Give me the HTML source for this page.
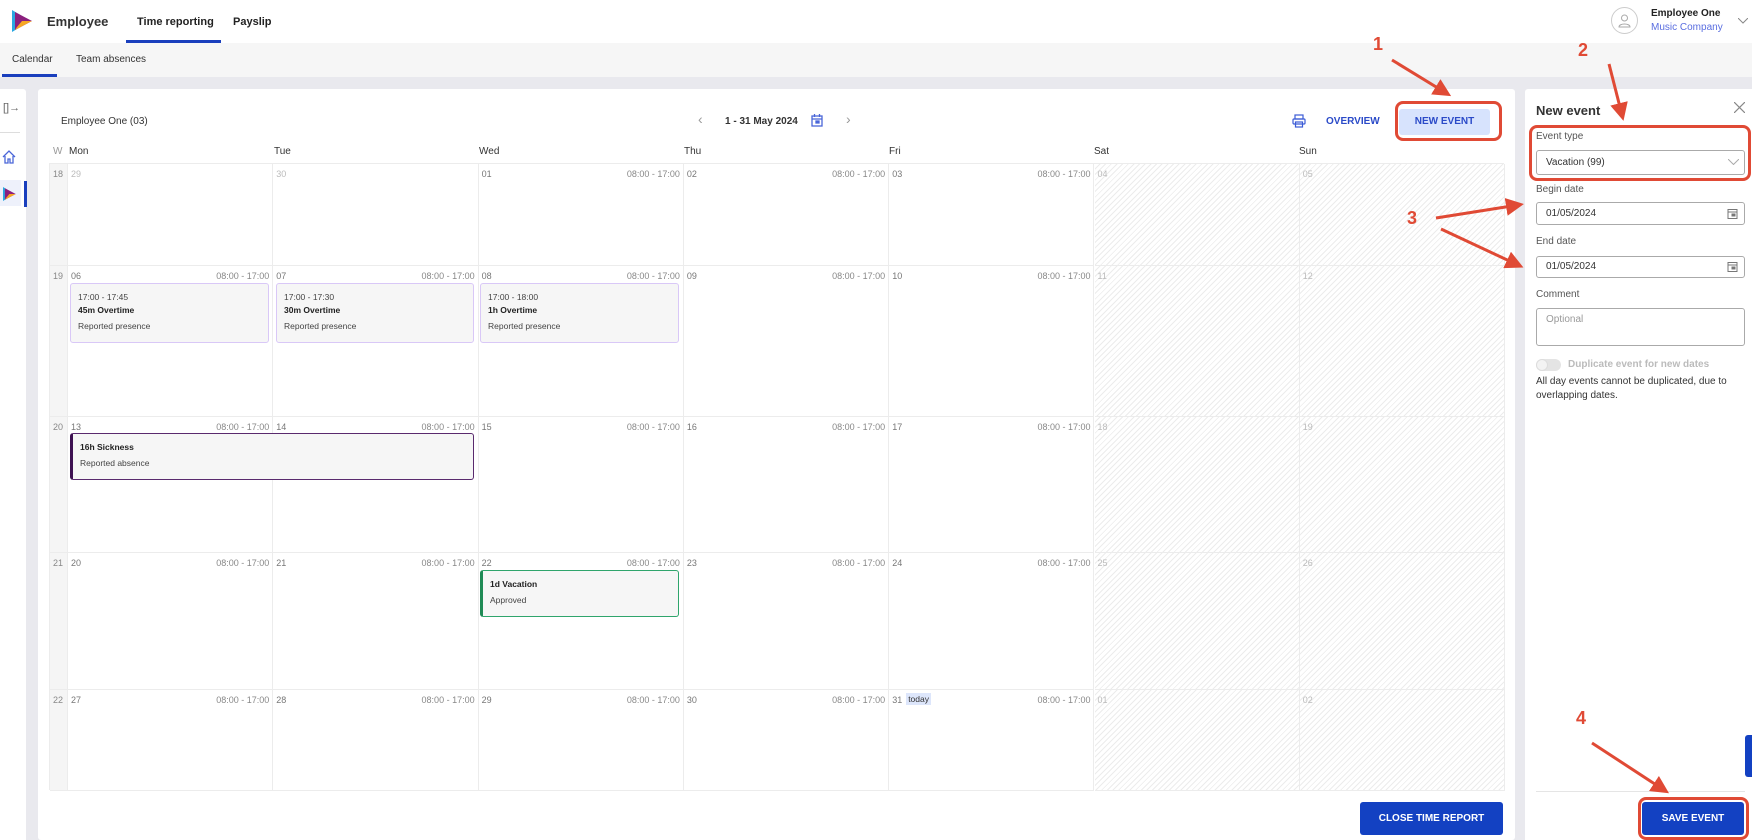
<!DOCTYPE html>
<html><head><meta charset="utf-8">
<style>
*{box-sizing:border-box;margin:0;padding:0}
body{width:1752px;height:840px;overflow:hidden;background:#e9e9ee;font-family:"Liberation Sans",sans-serif;color:#333;position:relative;font-size:10px}
.abs{position:absolute}
.hdr{left:0;top:0;width:1752px;height:43px;background:#fff}
.sub{left:0;top:43px;width:1752px;height:34px;background:#f6f6f6}
.card{left:38px;top:89px;width:1477px;height:751px;background:#fff;border-radius:3px}
.side{left:0;top:89px;width:26px;height:751px;background:#fff;border-radius:0 3px 0 0}
.panel{left:1525px;top:89px;width:227px;height:751px;background:#fff;border-radius:3px 0 0 0}
.cell{position:absolute;border-right:1px solid #ececec;border-bottom:1px solid #ececec}
.dn{position:absolute;left:3px;top:5px;font-size:9px;color:#777}
.dn.g{color:#bbb}
.tm{position:absolute;right:3px;top:5px;font-size:9px;color:#888}
.hatch{background:repeating-linear-gradient(135deg,#fff 0 3px,#ececec 3px 4px)}
.ev{position:absolute;background:#f6f6f6;border:1px solid #d9c8f7;border-radius:3px;padding:7px 0 0 7px;font-size:8.5px;color:#444;line-height:13px}
.ev b{color:#222}
.lbl{position:absolute;left:1536px;font-size:10px;color:#555}
.inp{position:absolute;left:1536px;width:209px;border:1px solid #aaa;border-radius:3px;background:#fff;font-size:10px;padding-left:9px;color:#333}
.red{position:absolute;border:3px solid #e04a35;border-radius:8px}
.num{position:absolute;color:#e04a35;font-weight:bold;font-size:18px}
.btn{position:absolute;background:#1341c2;color:#fff;font-weight:bold;font-size:10px;text-align:center;border-radius:3px}
</style></head><body>
<div class="abs hdr"></div>
<svg class="abs" style="left:12px;top:10px" width="22" height="22" viewBox="0 0 22 22"><polygon points="0,0 0,22 10,16 10,6" fill="#2aa7e0"/><polygon points="3,2 20,11 3,20" fill="#8b1f7e"/><polygon points="10,11 20,11 3,20 5,17" fill="#f7a823"/></svg>
<div class="abs" style="left:47px;top:14px;font-size:13px;font-weight:bold;color:#333">Employee</div>
<div class="abs" style="left:137px;top:16px;font-size:11px;font-weight:bold;color:#222">Time reporting</div>
<div class="abs" style="left:233px;top:16px;font-size:11px;font-weight:bold;color:#222">Payslip</div>
<div class="abs" style="left:126px;top:40px;width:95px;height:3px;background:#1a3fbd"></div>
<div class="abs" style="left:1611px;top:7px;width:27px;height:27px;border:1px solid #ccc;border-radius:50%"></div>
<svg class="abs" style="left:1617px;top:13px" width="15" height="15" viewBox="0 0 15 15" fill="none" stroke="#aaa"><circle cx="7.5" cy="5" r="3"/><path d="M2 14c0-4 11-4 11 0z"/></svg>
<div class="abs" style="left:1651px;top:8px;font-size:10px;font-weight:bold;color:#222">Employee One</div>
<div class="abs" style="left:1651px;top:22px;font-size:10px;color:#5a6ee0">Music Company</div>
<svg class="abs" style="left:1738px;top:18px" width="10" height="6"><path d="M0 0l5 5 5-5" fill="none" stroke="#888"/></svg>
<div class="abs sub"></div>
<div class="abs" style="left:12px;top:54px;font-size:10px;color:#333">Calendar</div>
<div class="abs" style="left:76px;top:54px;font-size:10px;color:#333">Team absences</div>
<div class="abs" style="left:2px;top:74px;width:55px;height:3px;background:#1a3fbd"></div>

<div class="abs side"></div>
<div class="abs" style="left:3px;top:102px;font-size:11px;color:#666">[]→</div>
<div class="abs" style="left:0;top:132px;width:20px;height:1px;background:#ddd"></div>
<svg class="abs" style="left:2px;top:150px" width="14" height="14" viewBox="0 0 14 14" fill="none" stroke="#4a66d8" stroke-width="1.3"><path d="M1 7L7 1l6 6M3 6v7h3V9h2v4h3V6"/></svg>
<div class="abs" style="left:0;top:180px;width:21px;height:26px;background:#eef1fb"></div>
<svg class="abs" style="left:3px;top:187px" width="14" height="14" viewBox="0 0 22 22"><polygon points="0,0 0,22 10,16 10,6" fill="#2aa7e0"/><polygon points="3,2 20,11 3,20" fill="#8b1f7e"/><polygon points="10,11 20,11 3,20 5,17" fill="#f7a823"/></svg>
<div class="abs" style="left:24px;top:181px;width:3px;height:26px;background:#1a3fbd"></div>

<div class="abs card"></div>
<div class="abs" style="left:61px;top:116px;font-size:10px;color:#333">Employee One (03)</div>
<div class="abs" style="left:698px;top:111px;font-size:14px;color:#999">‹</div>
<div class="abs" style="left:725px;top:116px;font-size:10px;font-weight:bold;color:#333">1 - 31 May 2024</div>
<svg class="abs" style="left:811px;top:114px" width="12" height="13" viewBox="0 0 12 13" fill="none" stroke="#4a66d8" stroke-width="1.3"><rect x="1" y="2" width="10" height="10"/><path d="M1 5h10M3.5 0v3M8.5 0v3"/><rect x="5" y="7" width="3" height="2" fill="#4a66d8"/></svg>
<div class="abs" style="left:846px;top:111px;font-size:14px;color:#999">›</div>
<svg class="abs" style="left:1292px;top:114px" width="14" height="14" viewBox="0 0 14 14" fill="none" stroke="#3b5bd6" stroke-width="1.2"><rect x="3" y="1" width="8" height="4"/><rect x="1" y="5" width="12" height="5" rx="1"/><rect x="3.5" y="8" width="7" height="5"/></svg>
<div class="abs" style="left:1326px;top:116px;font-size:10px;font-weight:bold;color:#2a4ac8">OVERVIEW</div>
<div class="abs" style="left:1399px;top:109px;width:91px;height:26px;background:#d7e3fd;border-radius:3px;color:#2a4ac8;font-weight:bold;font-size:10px;text-align:center;line-height:26px">NEW EVENT</div>

<div class="abs" style="left:53px;top:146px;font-size:10px;color:#999">W</div>
<div class="abs" style="left:69px;top:146px;font-size:10px;color:#333">Mon</div>
<div class="abs" style="left:274px;top:146px;font-size:10px;color:#333">Tue</div>
<div class="abs" style="left:479px;top:146px;font-size:10px;color:#333">Wed</div>
<div class="abs" style="left:684px;top:146px;font-size:10px;color:#333">Thu</div>
<div class="abs" style="left:889px;top:146px;font-size:10px;color:#333">Fri</div>
<div class="abs" style="left:1094px;top:146px;font-size:10px;color:#333">Sat</div>
<div class="abs" style="left:1299px;top:146px;font-size:10px;color:#333">Sun</div>

<div id="grid" class="abs" style="left:49px;top:163px;width:1455px;height:627px;border:1px solid #ececec;border-right:none;border-bottom:none"></div>
<script>
const g=document.getElementById('grid');
const rows=[0,102,253,389,526,627];
const wk=[18,19,20,21,22];
const days=[[29,30,'01','02','03','04','05'],['06','07','08','09',10,11,12],[13,14,15,16,17,18,19],[20,21,22,23,24,25,26],[27,28,29,30,31,'01','02']];
let h='';
for(let r=0;r<5;r++){
 const t=rows[r],hh=rows[r+1]-rows[r];
 h+=`<div class="cell" style="left:0;top:${t}px;width:18px;height:${hh}px;background:#f5f5f5"><span style="position:absolute;left:3px;top:5px;font-size:9px;color:#888">${wk[r]}</span></div>`;
 for(let c=0;c<7;c++){
  const x=18+c*205.3;const we=c>=5;
  const grey=(r==0&&c<2)||(r==4&&c>=5);
  h+=`<div class="cell${we?' hatch':''}" style="left:${x}px;top:${t}px;width:205.3px;height:${hh}px"><span class="dn${grey||we?' g':''}">${days[r][c]}</span>${(!we&&!(r==0&&c<2))?'<span class="tm">08:00 - 17:00</span>':''}${(r==4&&c==4)?'<span style="position:absolute;left:17px;top:3px;background:#dde6fb;font-size:8.5px;padding:1px 2px;color:#333">today</span>':''}</div>`;
 }
}
g.innerHTML=h;
</script>
<div class="ev" style="left:70px;top:283px;width:199px;height:60px"><span>17:00 - 17:45</span><br><b>45m Overtime</b><br><span style="line-height:18px">Reported presence</span></div>
<div class="ev" style="left:276px;top:283px;width:198px;height:60px"><span>17:00 - 17:30</span><br><b>30m Overtime</b><br><span style="line-height:18px">Reported presence</span></div>
<div class="ev" style="left:480px;top:283px;width:199px;height:60px"><span>17:00 - 18:00</span><br><b>1h Overtime</b><br><span style="line-height:18px">Reported presence</span></div>
<div class="ev" style="left:70px;top:433px;width:404px;height:47px;border:1px solid #5a2a6e;border-left:3px solid #3e1152;padding-top:7px"><b>16h Sickness</b><br><span style="line-height:18px">Reported absence</span></div>
<div class="ev" style="left:480px;top:570px;width:199px;height:47px;border:1px solid #2fa56c;border-left:3px solid #1f8a55;padding-top:7px"><b>1d Vacation</b><br><span style="line-height:18px">Approved</span></div>
<div class="btn" style="left:1360px;top:802px;width:143px;height:33px;line-height:33px">CLOSE TIME REPORT</div>

<div class="abs panel"></div>
<div class="abs" style="left:1536px;top:103px;font-size:13px;font-weight:bold;color:#333">New event</div>
<svg class="abs" style="left:1734px;top:102px" width="11" height="11"><path d="M0 0l11 11M11 0L0 11" stroke="#888" stroke-width="1.2"/></svg>
<div class="lbl" style="top:131px">Event type</div>
<div class="inp" style="top:150px;height:25px;line-height:23px">Vacation (99)</div>
<svg class="abs" style="left:1728px;top:159px" width="11" height="6"><path d="M0 0l5.5 5.5L11 0" fill="none" stroke="#aaa"/></svg>
<div class="lbl" style="top:184px">Begin date</div>
<div class="inp" style="top:202px;height:23px;line-height:21px">01/05/2024</div>
<div class="lbl" style="top:236px">End date</div>
<div class="inp" style="top:256px;height:22px;line-height:20px">01/05/2024</div>
<svg class="abs" style="left:1727px;top:208px" width="11" height="11" viewBox="0 0 11 11" fill="none" stroke="#777"><rect x="1" y="1.5" width="9" height="9"/><path d="M1 4h9"/><rect x="5" y="6" width="3" height="2" fill="#777"/></svg>
<svg class="abs" style="left:1727px;top:261px" width="11" height="11" viewBox="0 0 11 11" fill="none" stroke="#777"><rect x="1" y="1.5" width="9" height="9"/><path d="M1 4h9"/><rect x="5" y="6" width="3" height="2" fill="#777"/></svg>
<div class="lbl" style="top:289px">Comment</div>
<div class="inp" style="top:308px;height:38px;padding-top:5px;color:#999">Optional</div>
<div class="abs" style="left:1536px;top:359px;width:25px;height:12px;border-radius:6px;background:#e4e4e4"></div>
<div class="abs" style="left:1536px;top:359px;width:12px;height:12px;border-radius:6px;background:#f3f3f3;border:1px solid #ddd"></div>
<div class="abs" style="left:1568px;top:359px;font-size:10px;color:#bbb;font-weight:bold">Duplicate event for new dates</div>
<div class="abs" style="left:1536px;top:375px;font-size:10px;color:#333;line-height:14px;width:210px">All day events cannot be duplicated, due to overlapping dates.</div>
<div class="abs" style="left:1536px;top:791px;width:209px;height:1px;background:#e5e5e5"></div>
<div class="btn" style="left:1642px;top:802px;width:102px;height:33px;line-height:33px">SAVE EVENT</div>
<div class="abs" style="left:1745px;top:735px;width:7px;height:42px;background:#1341c2;border-radius:3px 0 0 3px"></div>

<div class="red" style="left:1395px;top:101px;width:107px;height:40px"></div>
<div class="red" style="left:1529px;top:125px;width:222px;height:56px"></div>
<div class="red" style="left:1638px;top:797px;width:111px;height:43px"></div>
<div class="num" style="left:1373px;top:34px">1</div>
<div class="num" style="left:1578px;top:40px">2</div>
<div class="num" style="left:1407px;top:208px">3</div>
<div class="num" style="left:1576px;top:708px">4</div>
<svg class="abs" style="left:0;top:0" width="1752" height="840">
<defs><marker id="a" markerWidth="6" markerHeight="6" refX="4" refY="3" orient="auto"><path d="M0 0L6 3 0 6z" fill="#e04a35"/></marker></defs>
<g stroke="#e04a35" stroke-width="3" marker-end="url(#a)" fill="none">
<line x1="1392" y1="60" x2="1446" y2="93"/>
<line x1="1609" y1="64" x2="1622" y2="115"/>
<line x1="1436" y1="218" x2="1518" y2="205"/>
<line x1="1441" y1="229" x2="1518" y2="265"/>
<line x1="1592" y1="743" x2="1664" y2="790"/>
</g></svg>
</body></html>
